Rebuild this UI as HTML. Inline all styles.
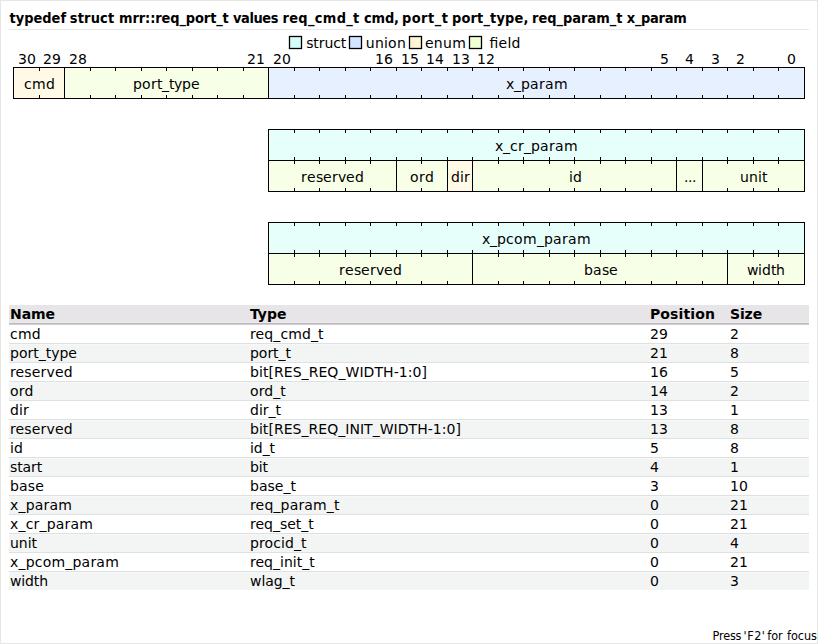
<!DOCTYPE html>
<html><head><meta charset="utf-8"><title>typedef struct</title>
<style>
html,body{margin:0;padding:0;background:#fff;}
body{width:818px;height:644px;position:relative;overflow:hidden;font-family:"DejaVu Sans","Liberation Sans",sans-serif;color:#000;}
#frame{position:absolute;left:0;top:0;width:816px;height:642px;border:1px solid #e6e6e4;}
h1{position:absolute;left:9px;top:10px;margin:0;font-size:13px;line-height:18px;font-weight:bold;white-space:nowrap;width:700px;height:18px;}
h1 span{position:absolute;top:0;transform:scaleY(1.09);transform-origin:0 13.5px;}
#hr{position:absolute;left:9px;top:29px;width:800px;height:1px;background:#e8e8e8;}
svg{position:absolute;left:0;top:0;}
svg text{font-family:"DejaVu Sans","Liberation Sans",sans-serif;font-size:14px;text-anchor:start;fill:#000;}
#tbl{position:absolute;left:9px;top:305px;width:800px;border-collapse:separate;border-spacing:0;table-layout:fixed;font-size:14px;line-height:18px;}
#tbl th,#tbl td{padding:0 0 0 1px;height:18px;text-align:left;white-space:nowrap;font-weight:normal;}
#tbl th{background:#e7e5e8;box-shadow:inset 0 -1px 0 #ebe9ec;border-bottom:1px solid #bdb7be;font-weight:bold;}
#tbl td{border-top:1px solid #dde2e1;}
#tbl tbody tr:nth-child(even) td{background:#f3f5f4;box-shadow:inset 0 1px 0 #f6f7f7;}
#tbl tbody tr:first-child td{border-top-color:#d2ced3;}
#f2{position:absolute;left:700px;top:628px;width:118px;height:16px;font-family:"DejaVu Sans Condensed","Liberation Sans",sans-serif;font-size:12.5px;line-height:16px;white-space:nowrap;}
#f2 span{position:absolute;top:0;}
</style></head><body>
<div id="frame"></div>
<h1><span style="left:0.5px;letter-spacing:0.00px">typedef</span> <span style="left:60.8px;letter-spacing:0.16px">struct</span> <span style="left:110.0px;letter-spacing:-0.11px">mrr::req_port_t</span> <span style="left:224.0px;letter-spacing:-0.42px">values</span> <span style="left:273.4px;letter-spacing:0.33px">req_cmd_t</span> <span style="left:355.1px;letter-spacing:-0.23px">cmd,</span> <span style="left:392.9px;letter-spacing:0.48px">port_t</span> <span style="left:443.0px;letter-spacing:0.14px">port_type,</span> <span style="left:523.1px;letter-spacing:-0.03px">req_param_t</span> <span style="left:617.8px;letter-spacing:-0.30px">x_param</span></h1>
<div id="hr"></div>
<svg width="818" height="300" viewBox="0 0 818 300">
<rect x="13.50" y="67.50" width="51.00" height="31.00" fill="#fff9e6" stroke="#000" stroke-width="1.0"/>
<rect x="64.50" y="67.50" width="204.00" height="31.00" fill="#f7ffe6" stroke="#000" stroke-width="1.0"/>
<rect x="268.50" y="67.50" width="536.00" height="31.00" fill="#e6f0ff" stroke="#000" stroke-width="1.0"/>
<path d="M778.50 67.50v3.5M778.50 98.50v-3.5M753.50 67.50v3.5M753.50 98.50v-3.5M727.50 67.50v3.5M727.50 98.50v-3.5M702.50 67.50v3.5M702.50 98.50v-3.5M676.50 67.50v3.5M676.50 98.50v-3.5M651.50 67.50v3.5M651.50 98.50v-3.5M625.50 67.50v3.5M625.50 98.50v-3.5M600.50 67.50v3.5M600.50 98.50v-3.5M574.50 67.50v3.5M574.50 98.50v-3.5M549.50 67.50v3.5M549.50 98.50v-3.5M523.50 67.50v3.5M523.50 98.50v-3.5M498.50 67.50v3.5M498.50 98.50v-3.5M472.50 67.50v3.5M472.50 98.50v-3.5M447.50 67.50v3.5M447.50 98.50v-3.5M421.50 67.50v3.5M421.50 98.50v-3.5M396.50 67.50v3.5M396.50 98.50v-3.5M370.50 67.50v3.5M370.50 98.50v-3.5M345.50 67.50v3.5M345.50 98.50v-3.5M319.50 67.50v3.5M319.50 98.50v-3.5M294.50 67.50v3.5M294.50 98.50v-3.5M268.50 67.50v3.5M268.50 98.50v-3.5M243.50 67.50v3.5M243.50 98.50v-3.5M217.50 67.50v3.5M217.50 98.50v-3.5M192.50 67.50v3.5M192.50 98.50v-3.5M166.50 67.50v3.5M166.50 98.50v-3.5M141.50 67.50v3.5M141.50 98.50v-3.5M115.50 67.50v3.5M115.50 98.50v-3.5M90.50 67.50v3.5M90.50 98.50v-3.5M64.50 67.50v3.5M64.50 98.50v-3.5M39.50 67.50v3.5M39.50 98.50v-3.5" stroke="#000" stroke-width="1.0" fill="none"/>
<text x="24 32 46" y="89.00">cmd</text>
<text x="133 142 151 157 162 169 174 182 191" y="89.00">port_type</text>
<text x="506 514 521 530 539 545 554" y="89.00">x_param</text>
<rect x="268.50" y="129.50" width="536.00" height="31.00" fill="#e6fffb" stroke="#000" stroke-width="1.0"/>
<path d="M778.50 129.50v3.5M778.50 160.50v-3.5M753.50 129.50v3.5M753.50 160.50v-3.5M727.50 129.50v3.5M727.50 160.50v-3.5M702.50 129.50v3.5M702.50 160.50v-3.5M676.50 129.50v3.5M676.50 160.50v-3.5M651.50 129.50v3.5M651.50 160.50v-3.5M625.50 129.50v3.5M625.50 160.50v-3.5M600.50 129.50v3.5M600.50 160.50v-3.5M574.50 129.50v3.5M574.50 160.50v-3.5M549.50 129.50v3.5M549.50 160.50v-3.5M523.50 129.50v3.5M523.50 160.50v-3.5M498.50 129.50v3.5M498.50 160.50v-3.5M472.50 129.50v3.5M472.50 160.50v-3.5M447.50 129.50v3.5M447.50 160.50v-3.5M421.50 129.50v3.5M421.50 160.50v-3.5M396.50 129.50v3.5M396.50 160.50v-3.5M370.50 129.50v3.5M370.50 160.50v-3.5M345.50 129.50v3.5M345.50 160.50v-3.5M319.50 129.50v3.5M319.50 160.50v-3.5M294.50 129.50v3.5M294.50 160.50v-3.5" stroke="#000" stroke-width="1.0" fill="none"/>
<text x="495 503 510 518 524 531 540 549 555 564" y="151.00">x_cr_param</text>
<rect x="268.50" y="160.50" width="128.00" height="31.00" fill="#f7ffe6" stroke="#000" stroke-width="1.0"/>
<rect x="396.50" y="160.50" width="51.00" height="31.00" fill="#f7ffe6" stroke="#000" stroke-width="1.0"/>
<rect x="447.50" y="160.50" width="25.00" height="31.00" fill="#fff9e6" stroke="#000" stroke-width="1.0"/>
<rect x="472.50" y="160.50" width="204.00" height="31.00" fill="#f7ffe6" stroke="#000" stroke-width="1.0"/>
<rect x="676.50" y="160.50" width="26.00" height="31.00" fill="#f7ffe6" stroke="#000" stroke-width="1.0"/>
<rect x="702.50" y="160.50" width="102.00" height="31.00" fill="#f7ffe6" stroke="#000" stroke-width="1.0"/>
<path d="M778.50 160.50v3.5M778.50 191.50v-3.5M753.50 160.50v3.5M753.50 191.50v-3.5M727.50 160.50v3.5M727.50 191.50v-3.5M702.50 160.50v3.5M702.50 191.50v-3.5M676.50 160.50v3.5M676.50 191.50v-3.5M651.50 160.50v3.5M651.50 191.50v-3.5M625.50 160.50v3.5M625.50 191.50v-3.5M600.50 160.50v3.5M600.50 191.50v-3.5M574.50 160.50v3.5M574.50 191.50v-3.5M549.50 160.50v3.5M549.50 191.50v-3.5M523.50 160.50v3.5M523.50 191.50v-3.5M498.50 160.50v3.5M498.50 191.50v-3.5M472.50 160.50v3.5M472.50 191.50v-3.5M447.50 160.50v3.5M447.50 191.50v-3.5M421.50 160.50v3.5M421.50 191.50v-3.5M396.50 160.50v3.5M396.50 191.50v-3.5M370.50 160.50v3.5M370.50 191.50v-3.5M345.50 160.50v3.5M345.50 191.50v-3.5M319.50 160.50v3.5M319.50 191.50v-3.5M294.50 160.50v3.5M294.50 191.50v-3.5" stroke="#000" stroke-width="1.0" fill="none"/>
<text x="301 307 316 323 332 338 346 355" y="182.00">reserved</text>
<text x="410 419 425" y="182.00">ord</text>
<text x="451 460 464" y="182.00">dir</text>
<text x="569 573" y="182.00">id</text>
<text x="684 688 692" y="182.00">...</text>
<text x="740 749 758 762" y="182.00">unit</text>
<rect x="268.50" y="222.50" width="536.00" height="31.00" fill="#e6fffb" stroke="#000" stroke-width="1.0"/>
<path d="M778.50 222.50v3.5M778.50 253.50v-3.5M753.50 222.50v3.5M753.50 253.50v-3.5M727.50 222.50v3.5M727.50 253.50v-3.5M702.50 222.50v3.5M702.50 253.50v-3.5M676.50 222.50v3.5M676.50 253.50v-3.5M651.50 222.50v3.5M651.50 253.50v-3.5M625.50 222.50v3.5M625.50 253.50v-3.5M600.50 222.50v3.5M600.50 253.50v-3.5M574.50 222.50v3.5M574.50 253.50v-3.5M549.50 222.50v3.5M549.50 253.50v-3.5M523.50 222.50v3.5M523.50 253.50v-3.5M498.50 222.50v3.5M498.50 253.50v-3.5M472.50 222.50v3.5M472.50 253.50v-3.5M447.50 222.50v3.5M447.50 253.50v-3.5M421.50 222.50v3.5M421.50 253.50v-3.5M396.50 222.50v3.5M396.50 253.50v-3.5M370.50 222.50v3.5M370.50 253.50v-3.5M345.50 222.50v3.5M345.50 253.50v-3.5M319.50 222.50v3.5M319.50 253.50v-3.5M294.50 222.50v3.5M294.50 253.50v-3.5" stroke="#000" stroke-width="1.0" fill="none"/>
<text x="482 490 497 506 514 523 537 544 553 562 568 577" y="244.00">x_pcom_param</text>
<rect x="268.50" y="253.50" width="204.00" height="31.00" fill="#f7ffe6" stroke="#000" stroke-width="1.0"/>
<rect x="472.50" y="253.50" width="255.00" height="31.00" fill="#f7ffe6" stroke="#000" stroke-width="1.0"/>
<rect x="727.50" y="253.50" width="77.00" height="31.00" fill="#f7ffe6" stroke="#000" stroke-width="1.0"/>
<path d="M778.50 253.50v3.5M778.50 284.50v-3.5M753.50 253.50v3.5M753.50 284.50v-3.5M727.50 253.50v3.5M727.50 284.50v-3.5M702.50 253.50v3.5M702.50 284.50v-3.5M676.50 253.50v3.5M676.50 284.50v-3.5M651.50 253.50v3.5M651.50 284.50v-3.5M625.50 253.50v3.5M625.50 284.50v-3.5M600.50 253.50v3.5M600.50 284.50v-3.5M574.50 253.50v3.5M574.50 284.50v-3.5M549.50 253.50v3.5M549.50 284.50v-3.5M523.50 253.50v3.5M523.50 284.50v-3.5M498.50 253.50v3.5M498.50 284.50v-3.5M472.50 253.50v3.5M472.50 284.50v-3.5M447.50 253.50v3.5M447.50 284.50v-3.5M421.50 253.50v3.5M421.50 284.50v-3.5M396.50 253.50v3.5M396.50 284.50v-3.5M370.50 253.50v3.5M370.50 284.50v-3.5M345.50 253.50v3.5M345.50 284.50v-3.5M319.50 253.50v3.5M319.50 284.50v-3.5M294.50 253.50v3.5M294.50 284.50v-3.5" stroke="#000" stroke-width="1.0" fill="none"/>
<text x="339 345 354 361 370 376 384 393" y="275.00">reserved</text>
<text x="584 593 602 609" y="275.00">base</text>
<text x="747 758 762 771 776" y="275.00">width</text>
<text x="18 27" y="64.00">30</text>
<text x="43 52" y="64.00">29</text>
<text x="69 78" y="64.00">28</text>
<text x="247 256" y="64.00">21</text>
<text x="273 282" y="64.00">20</text>
<text x="375 384" y="64.00">16</text>
<text x="401 410" y="64.00">15</text>
<text x="426 435" y="64.00">14</text>
<text x="452 461" y="64.00">13</text>
<text x="477 486" y="64.00">12</text>
<text x="660.00" y="64.00" textLength="9">5</text>
<text x="685.00" y="64.00" textLength="9">4</text>
<text x="711.00" y="64.00" textLength="9">3</text>
<text x="736.00" y="64.00" textLength="9">2</text>
<text x="787.00" y="64.00" textLength="9">0</text>
<rect x="289.50" y="36.5" width="12" height="12" fill="#d4fff8" stroke="#000" stroke-width="1.3"/>
<text x="306.20" y="47.50" textLength="40">struct</text>
<rect x="349.50" y="36.5" width="12" height="12" fill="#d4e6ff" stroke="#000" stroke-width="1.3"/>
<text x="365.80" y="47.50" textLength="40">union</text>
<rect x="409.50" y="36.5" width="12" height="12" fill="#fff4d4" stroke="#000" stroke-width="1.3"/>
<text x="424.90" y="47.50" textLength="41">enum</text>
<rect x="469.50" y="36.5" width="12" height="12" fill="#f1ffd4" stroke="#000" stroke-width="1.3"/>
<text x="489.50" y="47.50" textLength="31">field</text>
</svg>
<table id="tbl"><colgroup><col style="width:240px"><col style="width:400px"><col style="width:80px"><col style="width:80px"></colgroup>
<thead><tr><th style="letter-spacing:-0.062px">Name</th><th style="letter-spacing:-0.048px">Type</th><th style="letter-spacing:0.114px">Position</th><th style="letter-spacing:-0.131px">Size</th></tr></thead>
<tbody>
<tr><td style="letter-spacing:0.259px">cmd</td><td style="letter-spacing:0.115px">req_cmd_t</td><td style="letter-spacing:0.093px">29</td><td style="letter-spacing:0.093px">2</td></tr>
<tr><td>port_type</td><td style="letter-spacing:-0.031px">port_t</td><td style="letter-spacing:0.093px">21</td><td style="letter-spacing:0.093px">8</td></tr>
<tr><td style="letter-spacing:0.148px">reserved</td><td style="letter-spacing:0.061px">bit[RES_REQ_WIDTH-1:0]</td><td style="letter-spacing:0.093px">16</td><td style="letter-spacing:0.093px">5</td></tr>
<tr><td style="letter-spacing:0.264px">ord</td><td style="letter-spacing:0.061px">ord_t</td><td style="letter-spacing:0.093px">14</td><td style="letter-spacing:0.093px">2</td></tr>
<tr><td style="letter-spacing:0.156px">dir</td><td style="letter-spacing:-0.004px">dir_t</td><td style="letter-spacing:0.093px">13</td><td style="letter-spacing:0.093px">1</td></tr>
<tr><td style="letter-spacing:0.148px">reserved</td><td style="letter-spacing:0.039px">bit[RES_REQ_INIT_WIDTH-1:0]</td><td style="letter-spacing:0.093px">13</td><td style="letter-spacing:0.093px">8</td></tr>
<tr><td style="letter-spacing:0.112px">id</td><td style="letter-spacing:-0.066px">id_t</td><td style="letter-spacing:0.093px">5</td><td style="letter-spacing:0.093px">8</td></tr>
<tr><td style="letter-spacing:-0.121px">start</td><td style="letter-spacing:-0.089px">bit</td><td style="letter-spacing:0.093px">4</td><td style="letter-spacing:0.093px">1</td></tr>
<tr><td style="letter-spacing:0.157px">base</td><td style="letter-spacing:0.023px">base_t</td><td style="letter-spacing:0.093px">3</td><td style="letter-spacing:0.093px">10</td></tr>
<tr><td style="letter-spacing:0.182px">x_param</td><td style="letter-spacing:0.165px">req_param_t</td><td style="letter-spacing:0.093px">0</td><td style="letter-spacing:0.093px">21</td></tr>
<tr><td style="letter-spacing:0.182px">x_cr_param</td><td style="letter-spacing:-0.016px">req_set_t</td><td style="letter-spacing:0.093px">0</td><td style="letter-spacing:0.093px">21</td></tr>
<tr><td style="letter-spacing:-0.031px">unit</td><td style="letter-spacing:0.104px">procid_t</td><td style="letter-spacing:0.093px">0</td><td style="letter-spacing:0.093px">4</td></tr>
<tr><td style="letter-spacing:0.207px">x_pcom_param</td><td style="letter-spacing:0.011px">req_init_t</td><td style="letter-spacing:0.093px">0</td><td style="letter-spacing:0.093px">21</td></tr>
<tr><td style="letter-spacing:-0.118px">width</td><td style="letter-spacing:-0.049px">wlag_t</td><td style="letter-spacing:0.093px">0</td><td style="letter-spacing:0.093px">3</td></tr>
</tbody></table>
<div id="f2"><span style="left:12.6px;letter-spacing:-0.17px">Press</span> <span style="left:43.6px;letter-spacing:0.50px">'F2'</span> <span style="left:67.2px;letter-spacing:0.05px">for</span> <span style="left:87.1px;letter-spacing:-0.05px">focus</span></div>
</body></html>
